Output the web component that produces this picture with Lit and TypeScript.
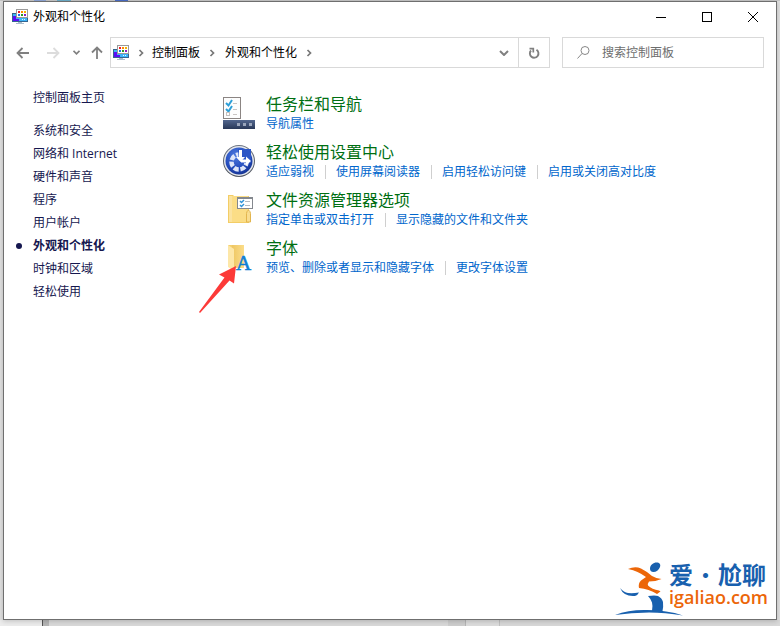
import { LitElement, html, svg, css } from "lit";
import { customElement, property } from "lit/decorators.js";

const panelIcon = html`<svg class="panel-icon" width="16" height="16" viewBox="0 0 16 16" shape-rendering="crispEdges" aria-hidden="true">
  <path fill="#35648f" d="M0 4h5v9H0zM0 9h16v4H0z" />
  <path fill="#3cb4f8" d="M1 5h14v7H1z" />
  <path fill="#5a0cf5" d="M1 7h3v3h3v2H1z" />
  <path fill="#e8f6ff" d="M10 10h1v1h-1zM12 10h1v1h-1z" />
  <path fill="#a9bccb" d="M6 13h4v1H6zM4 14h8v1H4z" />
  <path fill="#9a9a9a" d="M4 0h12v9H4z" />
  <path fill="#fff" d="M5 1h10v7H5z" />
  <path fill="#f01c24" d="M6 2h2v2H6z" />
  <path fill="#ff8a00" d="M9 2h2v2H9z" />
  <path fill="#f5b400" d="M12 2h2v2h-2z" />
  <path fill="#1b74e8" d="M6 5h2v2H6z" />
  <path fill="#2e9b1f" d="M9 5h2v2H9z" />
  <path fill="#8a1fc0" d="M12 5h2v2h-2z" />
</svg>`;

const crumbArrow = html`<svg class="crumb-arrow" width="25" height="10" viewBox="0 0 25 10" aria-hidden="true">
  <path d="M10.500 2L13.500 5L10.500 8" fill="none" stroke="#777" stroke-width="1.700" />
</svg>`;

const taskbarArt = svg`
  <rect x="0.500" y="0.500" width="17" height="21" fill="#fdfdfd" stroke="#8b8583" />
  <path d="M3 6l2.500 2.500L9 3M3 12l2.500 2.500L9 9" fill="none" stroke="#2d9fd8" stroke-width="2" />
  <path d="M10 6.500h4M10 12.500h4M10 17.500h4" stroke="#c9c5c3" />
  <rect x="3.500" y="15.500" width="3" height="3" fill="none" stroke="#c4c0be" />
  <rect x="0" y="23" width="32" height="9" fill="url(#bar)" />
  <path fill="#9aa5bb" d="M14 26h3v3h-3zM20 26h3v3h-3zM26 26h3v3h-3z" />
  <defs><linearGradient id="bar" x2="0" y2="1"><stop stop-color="#53678f" /><stop offset="1" stop-color="#293858" /></linearGradient></defs>`;

const easeArt = svg`
  <defs>
    <linearGradient id="ring" x2="0" y2="1"><stop stop-color="#6d7583" /><stop offset="1" stop-color="#50555f" /></linearGradient>
    <radialGradient id="disc" cx=".4" cy=".3" r=".8"><stop stop-color="#4f7be0" /><stop offset=".6" stop-color="#234bbb" /><stop offset="1" stop-color="#122d88" /></radialGradient>
  </defs>
  <circle cx="16" cy="16" r="16" fill="url(#ring)" />
  <circle cx="16" cy="16" r="15" fill="#e4e7ec" />
  <circle cx="16" cy="16" r="13.500" fill="url(#disc)" />
  <circle cx="16" cy="17" r="7.500" fill="none" stroke="#dfe6f8" stroke-width="4.500" stroke-dasharray="5 1.730" stroke-dashoffset="-12" />
  <path d="M16 18L15 4h13v14z" fill="#2c56c6" />
  <path d="M16 5h3v7h3l-4.500 5-4.500-5h3z" fill="#fff" />
  <path d="M18 14.500h5v-3l5 4.500-5 4.500v-3h-5z" fill="#fff" />`;

const explorerArt = svg`
  <path d="M5 2h5l1 1h15v27H5z" fill="#f3cd66" />
  <path d="M6 3h3v26H6z" fill="#fbe3a0" />
  <path d="M9 3h16v26H9z" fill="#fbdd86" />
  <path d="M23.500 29v-8.500q0-2 2-3.500 2 1.500 2 3.500V29z" fill="#f9dd90" stroke="#e2b54e" />
  <rect x="14.500" y="4.500" width="15" height="11" fill="#fff" stroke="#84888e" />
  <path d="M14 4h16v2H14z" fill="#84888e" />
  <path d="M17 8l1.500 1.500L21 7M17 12l1.500 1.500L21 11" fill="none" stroke="#2f93d8" stroke-width="1.500" />
  <path d="M22 8.500h5M22 12.500h5" stroke="#b4b9c0" />`;

const fontsArt = svg`
  <path d="M5 4h16v23H9z" fill="#f4cf6c" />
  <path d="M9 4h12v23H9z" fill="url(#folder)" />
  <path d="M5 4l6 4v22l-6-4z" fill="#fde7a8" />
  <text x="13" y="29" class="font-letter">A</text>
  <defs><linearGradient id="folder"><stop stop-color="#eec662" /><stop offset="1" stop-color="#fbdd8a" /></linearGradient></defs>`;

interface Category {
  title: string;
  art: unknown;
  links: string[];
  marked?: boolean;
}

const categories: Category[] = [
  { title: "任务栏和导航", art: taskbarArt, links: ["导航属性"] },
  { title: "轻松使用设置中心", art: easeArt, links: ["适应弱视", "使用屏幕阅读器", "启用轻松访问键", "启用或关闭高对比度"] },
  { title: "文件资源管理器选项", art: explorerArt, links: ["指定单击或双击打开", "显示隐藏的文件和文件夹"] },
  { title: "字体", art: fontsArt, links: ["预览、删除或者显示和隐藏字体", "更改字体设置"], marked: true },
];

const sections = ["系统和安全", "网络和 Internet", "硬件和声音", "程序", "用户帐户", "外观和个性化", "时钟和区域", "轻松使用"];

@customElement("category-item")
class CategoryItem extends LitElement {
  @property({ attribute: false }) item!: Category;

  static styles = css`
    :host { display: flex; gap: 11px; }
    a { text-decoration: none; color: inherit; }
    a:hover { text-decoration: underline; }
    .icon { position: relative; flex: none; width: 32px; height: 32px; margin-top: 3px; }
    .art { display: block; }
    .font-letter { font: 21px "Liberation Serif", serif; fill: #0f7fd2; stroke: #0f7fd2; stroke-width: 0.6px; }
    .pointer { position: absolute; left: -24px; top: 24px; }
    .title { margin: 0; font-size: 16px; font-weight: 400; line-height: 20px; color: #006f12; }
    .links { display: flex; flex-wrap: wrap; margin: 0; padding: 0; list-style: none; line-height: 20px; color: #0066cc; }
    .link { display: flex; align-items: center; }
    .link + .link::before { content: ""; width: 1px; height: 14px; margin: 0 10px 0 11px; background: #cfcfcf; }
  `;

  render() {
    const { title, art, links, marked } = this.item;
    return html`
      <div class="icon">
        <svg class="art" width="32" height="32" viewBox="0 0 32 32" aria-hidden="true">${art}</svg>
        ${marked
          ? html`<svg class="pointer" width="38" height="48" viewBox="0 0 38 48" aria-hidden="true">
              <path d="M37 1L20 9.500L25.500 12.500L0 47L1 48L30.500 15.500L35 18.500z" fill="#fc3a38" />
            </svg>`
          : ""}
      </div>
      <div>
        <h2 class="title"><a href="#">${title}</a></h2>
        <ul class="links">${links.map((l) => html`<li class="link"><a href="#">${l}</a></li>`)}</ul>
      </div>
    `;
  }
}

@customElement("app-root")
class AppRoot extends LitElement {
  static styles = css`
    :host {
      display: flex;
      box-sizing: border-box;
      min-height: 100vh;
      padding: 1px 3px 6px;
      font: 12px/18px "Open Sans", "Noto Sans CJK SC", sans-serif;
      color: #000;
      background:
        linear-gradient(90deg, #ececec 0 42px, #555 42px 43px, #b4b4b4 43px 49px, #d9d9d9 49px 448px, #cdcdcd 448px 465px, #b5b5b5 465px 466px, #dcdcdc 466px 499px, #c0c0c0 499px 500px, #d8d8d8 500px) bottom / 100% 6px no-repeat,
        linear-gradient(90deg, #c8c8c8 0 34px, #8fa8d8 34px 46px, #c8c8c8 46px 57px, #6fb0cc 57px 71px, #c8c8c8 71px 115px, #4a6ec8 115px 128px, #c8c8c8 128px) top / 100% 1px no-repeat,
        #e0e0e0;
    }
    button { display: grid; place-items: center; margin: 0; padding: 0; border: 0; background: none; font: inherit; }
    a { color: inherit; text-decoration: none; }
    .window { position: relative; flex: 1; min-width: 0; border: 1px solid #6f6f6f; background: #fff; box-shadow: 0 1px 5px #0003; }
    .titlebar { display: flex; align-items: center; height: 29px; padding-left: 8px; }
    .panel-icon { flex: none; display: block; }
    .caption { flex: 1; margin: 0 0 0 5px; font-size: 12px; font-weight: 400; }
    .caption-button { width: 46px; height: 29px; }
    .toolbar { display: flex; margin-top: 6px; padding: 0 12px 0 4px; height: 31px; }
    .nav { width: 30px; }
    .nav-recent { width: 17px; }
    .nav-up { width: 23px; margin-right: 2px; }
    .address { display: flex; align-items: center; flex: 1; box-sizing: border-box; border: 1px solid #d9d9d9; margin-right: 12px; padding-left: 2px; min-width: 0; }
    .crumbs { display: flex; align-items: center; flex: 1; min-width: 0; white-space: nowrap; }
    .crumb-arrow { flex: none; }
    .crumb-lead { margin-right: -2px; display: flex; }
    .drop { width: 28px; height: 29px; }
    .refresh { width: 31px; height: 29px; border-left: 1px solid #d9d9d9; }
    .search { display: flex; align-items: center; gap: 12px; flex: 0 1 202px; box-sizing: border-box; border: 1px solid #d9d9d9; padding-left: 14px; }
    .search-input { flex: 1; min-width: 0; border: 0; padding: 0; outline: 0; font: inherit; color: #000; background: none; }
    .search-input::placeholder { color: #6d6d6d; opacity: 1; }
    .body { display: flex; padding: 18px 12px 0 29px; }
    .side { flex: none; width: 190px; line-height: 23px; color: #15174f; }
    .home { display: block; margin-bottom: 10px; }
    .sections { margin: 0; padding: 0; list-style: none; }
    .section { display: flex; align-items: center; }
    .current { font-weight: 700; }
    .current::before { content: ""; width: 6px; height: 6px; margin: 0 11px 0 -17px; border-radius: 50%; background: #15174f; }
    .main { display: flex; flex-direction: column; gap: 8px; padding-top: 8px; }
    .brand { position: absolute; right: 8px; bottom: 3px; display: flex; }
    .brand-text { display: flex; flex-direction: column; margin-left: -15px; }
    .brand-cn { font: 700 24px/24px "Noto Sans CJK SC", sans-serif; color: #1860ae; display: flex; }
    .brand-dot { width: 25px; text-align: center; font-weight: 400; }
    .brand-en { font: 600 18px/22px "Open Sans", sans-serif; color: #ec6608; }
  `;

  render() {
    return html`
      <div class="window">
        <header class="titlebar">
          ${panelIcon}
          <h1 class="caption">外观和个性化</h1>
          <button class="caption-button" aria-label="最小化">
            <svg width="10" height="10" shape-rendering="crispEdges"><path d="M0 5.500h10" stroke="#000" /></svg>
          </button>
          <button class="caption-button" aria-label="最大化">
            <svg width="10" height="10" shape-rendering="crispEdges"><path d="M.5.5h9v9h-9z" fill="none" stroke="#000" /></svg>
          </button>
          <button class="caption-button" aria-label="关闭">
            <svg width="10" height="10"><path d="M0 0l10 10M10 0L0 10" stroke="#000" /></svg>
          </button>
        </header>

        <div class="toolbar">
          <button class="nav" aria-label="后退">
            <svg width="14" height="12" viewBox="0 0 14 12"><path d="M13 6H2M6.500 1L1.500 6l5 5" fill="none" stroke="#808080" stroke-width="1.800" /></svg>
          </button>
          <button class="nav" aria-label="前进" disabled>
            <svg width="14" height="12" viewBox="0 0 14 12"><path d="M1 6h11M7.500 1l5 5-5 5" fill="none" stroke="#dcdcdc" stroke-width="1.800" /></svg>
          </button>
          <button class="nav-recent" aria-label="最近位置">
            <svg width="7" height="5" viewBox="0 0 7 5"><path d="M.5.8l3 3 3-3" fill="none" stroke="#808080" stroke-width="1.700" /></svg>
          </button>
          <button class="nav-up" aria-label="向上">
            <svg width="12" height="13" viewBox="0 0 12 13"><path d="M6 13V2M1 6.500l5-5 5 5" fill="none" stroke="#808080" stroke-width="1.800" /></svg>
          </button>
          <div class="address">
            ${panelIcon}
            <nav class="crumbs" aria-label="地址">
              <span class="crumb-lead">${crumbArrow}</span><a href="#">控制面板</a>${crumbArrow}<a href="#">外观和个性化</a>${crumbArrow}
            </nav>
            <button class="drop" aria-label="展开">
              <svg width="10" height="6" viewBox="0 0 10 6"><path d="M1 1l4 4 4-4" fill="none" stroke="#808080" stroke-width="2" /></svg>
            </button>
            <button class="refresh" aria-label="刷新">
              <svg width="12" height="12" viewBox="0 0 12 12"><path d="M8.500 2.800A4.300 4.300 0 1 1 3 3.500" fill="none" stroke="#808080" stroke-width="1.900" /><path d="M1.500 1.700H5.300V5.500" fill="none" stroke="#808080" stroke-width="1.700" /></svg>
            </button>
          </div>
          <label class="search">
            <svg width="13" height="13" viewBox="0 0 13 13" aria-hidden="true"><circle cx="8" cy="4.500" r="4" fill="none" stroke="#888" /><path d="M5 7.500L.5 12.500" stroke="#888" /></svg>
            <input class="search-input" type="text" placeholder="搜索控制面板" aria-label="搜索控制面板" />
          </label>
        </div>

        <div class="body">
          <nav class="side">
            <a class="home" href="#">控制面板主页</a>
            <ul class="sections">
              ${sections.map((s) => html`<li class="section ${s === "外观和个性化" ? "current" : ""}"><a href="#">${s}</a></li>`)}
            </ul>
          </nav>
          <main class="main">${categories.map((c) => html`<category-item .item=${c}></category-item>`)}</main>
        </div>

        <div class="brand">
          <svg width="69" height="54" viewBox="0 0 69 54" aria-hidden="true">
            <path fill="#1860ae" d="M35 6.500c0-3.500 3.500-6 6.500-6 3 0 4.500 2 3.500 4.500-1 3-4 5-6.500 5-2.500 0-3.500-1.500-3.500-3.500z" />
            <path fill="#ec6608" d="M13 7q7-3 13-.5 6 3 11 7.500 4 2.500 9.500 3-6 2.500-12.500 2.500-1.500 2-1 4 4 4 11 5l1.500 1-3.500 2.500Q34 27 24 26q-1-5 2-7.500l5-3.500q-4-3-8.500-5-4-2-9.500-3z" />
            <path fill="#1860ae" d="M5 26q4 4.500 8 5 5 .5 11-.5-1.500 3-4 3.500-11 1-15-8z" />
            <path fill="#1860ae" d="M33 34q7-1 10 0 4 2 5 6 .5 5-.5 9H37q1-5 0-8.500-1.500-4-4-6.500z" />
            <path fill="#1860ae" d="M0 53Q14 47.500 32 48q20 0 36 5.500-18-3-34-3-18 0-34 2.500z" />
          </svg>
          <div class="brand-text">
            <span class="brand-cn">爱<span class="brand-dot">·</span>尬聊</span>
            <span class="brand-en">igaliao.com</span>
          </div>
        </div>
      </div>
    `;
  }
}
